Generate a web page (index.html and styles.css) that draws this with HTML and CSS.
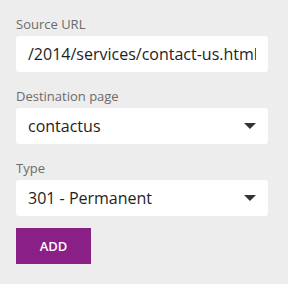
FILE: index.html
```html
<!DOCTYPE html>
<html>
<head>
<meta charset="utf-8">
<link rel="stylesheet" href="styles.css">
</head>
<body>
<form class="form">
  <div class="field">
    <label class="label">Source URL</label>
    <div class="control"><span class="value">/2014/services/contact-us.html</span></div>
  </div>
  <div class="field">
    <label class="label">Destination page</label>
    <div class="control select"><span class="value">contactus</span><span class="caret"></span></div>
  </div>
  <div class="field">
    <label class="label">Type</label>
    <div class="control select"><span class="value">301 - Permanent</span><span class="caret"></span></div>
  </div>
  <button type="button" class="btn">ADD</button>
</form>
</body>
</html>
```
FILE: styles.css
```css
html, body {
  margin: 0;
  padding: 0;
  background: #ededed;
  width: 288px;
  height: 284px;
  overflow: hidden;
}
.form {
  display: flex;
  flex-direction: column;
  padding: 16px 20px 0 16px;
  font-family: "Open Sans", sans-serif;
}
.field {
  display: flex;
  flex-direction: column;
  margin-bottom: 16px;
}
.field:nth-child(3) { margin-bottom: 12px; }
.label {
  font-size: 13px;
  line-height: 16px;
  color: #6b6b6b;
  margin-bottom: 4px;
}
.control {
  height: 36px;
  background: #fff;
  border-radius: 3px;
  display: flex;
  align-items: center;
  padding: 0 12px;
  overflow: hidden;
  white-space: nowrap;
}
.value {
  font-size: 16px;
  color: #1e1e1e;
  overflow: hidden;
  flex: 1;
}
.caret {
  width: 0;
  height: 0;
  border-left: 6px solid transparent;
  border-right: 6px solid transparent;
  border-top: 6px solid #333;
}
.btn {
  align-self: flex-start;
  width: 75px;
  height: 36px;
  background: #8b1f88;
  color: #fff;
  border: 0;
  font-family: "Open Sans", sans-serif;
  font-size: 13px;
  font-weight: 600;
  padding: 0;
}
```
